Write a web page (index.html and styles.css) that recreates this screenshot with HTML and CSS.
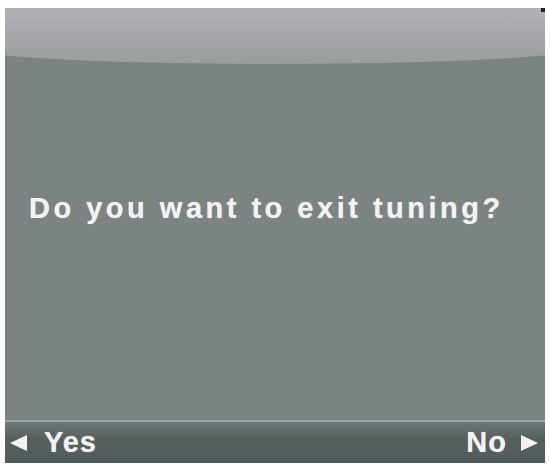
FILE: index.html
```html
<!DOCTYPE html>
<html>
<head>
    <title>Exit Tuning</title>
    <link rel="stylesheet" href="styles.css">
</head>
<body>
    <div class="screen">
        <div class="top-band"></div>
        <div class="message">Do you want to exit tuning?</div>
        <div class="softkeys">
            <span class="key key-left"><span class="arrow arrow-left"></span>Yes</span>
            <span class="key key-right">No<span class="arrow arrow-right"></span></span>
        </div>
    </div>
</body>
</html>
```

FILE: styles.css
```css
body {
    margin: 0;
    background: #ffffff;
    font-family: "Liberation Sans", Arial, sans-serif;
}
.screen {
    margin: 8px 5px 0 5px;
    height: 455px;
    background: #7b8383;
    display: flex;
    flex-direction: column;
    overflow: hidden;
    position: relative;
}
.screen::after {
    content: "";
    position: absolute;
    top: 0;
    right: 0;
    width: 4px;
    height: 4px;
    background: #222;
}
.top-band {
    height: 56px;
    margin: 0 -60px;
    background: linear-gradient(#b2b2b6, #a2a4a6 60%, #9a9e9e);
    border-radius: 0 0 50% 50% / 0 0 20px 20px;
    flex-shrink: 0;
}
.message {
    flex: 1;
    display: flex;
    align-items: center;
    padding-left: 24px;
    padding-bottom: 68px;
    color: #f2f2f2;
    font-size: 29px;
    font-weight: bold;
    letter-spacing: 3.5px;
    white-space: nowrap;
    text-shadow: 0 0 1px rgba(255, 255, 255, 0.6);
}
.softkeys {
    height: 41px;
    border-top: 2px solid #9aa2a2;
    background: linear-gradient(#6f7878, #56605f 40%, #4f5b5a);
    display: flex;
    justify-content: space-between;
    align-items: center;
    color: #f2f2f2;
    font-size: 29px;
    font-weight: bold;
    letter-spacing: 1px;
    flex-shrink: 0;
    text-shadow: 0 0 1px rgba(255, 255, 255, 0.6);
}
.key {
    display: flex;
    align-items: center;
}
.key-left {
    padding-left: 5px;
}
.key-right {
    padding-right: 7px;
}
.arrow {
    width: 0;
    height: 0;
    border-top: 8px solid transparent;
    border-bottom: 8px solid transparent;
}
.arrow-left {
    border-right: 17px solid #f2f2f2;
    margin-right: 17px;
}
.arrow-right {
    border-left: 17px solid #f2f2f2;
    margin-left: 14px;
}
```
